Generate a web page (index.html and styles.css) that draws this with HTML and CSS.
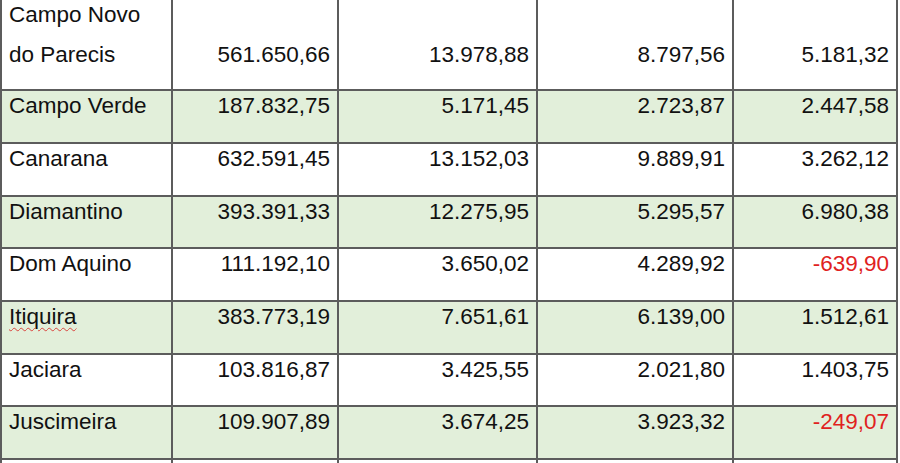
FILE: index.html
```html
<!DOCTYPE html>
<html lang="pt">
<head>
<meta charset="utf-8">
<title>Tabela</title>
<link rel="stylesheet" href="styles.css">
</head>
<body>
<div class="sheet">
  <div class="row first">
    <div class="cell name"><div>Campo Novo</div><div class="second-line">do Parecis</div></div>
    <div class="cell num low">561.650,66</div>
    <div class="cell num low">13.978,88</div>
    <div class="cell num low">8.797,56</div>
    <div class="cell num low">5.181,32</div>
  </div>
  <div class="row green">
    <div class="cell name">Campo Verde</div>
    <div class="cell num">187.832,75</div>
    <div class="cell num">5.171,45</div>
    <div class="cell num">2.723,87</div>
    <div class="cell num">2.447,58</div>
  </div>
  <div class="row">
    <div class="cell name">Canarana</div>
    <div class="cell num">632.591,45</div>
    <div class="cell num">13.152,03</div>
    <div class="cell num">9.889,91</div>
    <div class="cell num">3.262,12</div>
  </div>
  <div class="row green short">
    <div class="cell name">Diamantino</div>
    <div class="cell num">393.391,33</div>
    <div class="cell num">12.275,95</div>
    <div class="cell num">5.295,57</div>
    <div class="cell num">6.980,38</div>
  </div>
  <div class="row">
    <div class="cell name">Dom Aquino</div>
    <div class="cell num">111.192,10</div>
    <div class="cell num">3.650,02</div>
    <div class="cell num">4.289,92</div>
    <div class="cell num neg">-639,90</div>
  </div>
  <div class="row green">
    <div class="cell name"><span class="spell">Itiquira</span></div>
    <div class="cell num">383.773,19</div>
    <div class="cell num">7.651,61</div>
    <div class="cell num">6.139,00</div>
    <div class="cell num">1.512,61</div>
  </div>
  <div class="row short">
    <div class="cell name">Jaciara</div>
    <div class="cell num">103.816,87</div>
    <div class="cell num">3.425,55</div>
    <div class="cell num">2.021,80</div>
    <div class="cell num">1.403,75</div>
  </div>
  <div class="row green">
    <div class="cell name">Juscimeira</div>
    <div class="cell num">109.907,89</div>
    <div class="cell num">3.674,25</div>
    <div class="cell num">3.923,32</div>
    <div class="cell num neg">-249,07</div>
  </div>
  <div class="row last">
    <div class="cell name"></div>
    <div class="cell num"></div>
    <div class="cell num"></div>
    <div class="cell num"></div>
    <div class="cell num"></div>
  </div>
</div>
</body>
</html>
```

FILE: styles.css
```css
html, body {
  margin: 0;
  padding: 0;
  background: #ffffff;
  overflow: hidden;
}

.sheet {
  width: 898px;
  border-left: 2px solid #5c5c5c;
  box-sizing: border-box;
  font-family: "Liberation Sans", Arial, sans-serif;
  font-size: 22.5px;
  line-height: 30px;
  color: #111111;
}

.row {
  display: grid;
  grid-template-columns: 171px 166px 199px 196px 164px;
  height: 53px;
  box-sizing: border-box;
  border-bottom: 2px solid #5c5c5c;
  background: #ffffff;
}

.row.first {
  height: 91px;
}

.row.short {
  height: 52px;
}

.row.last {
  height: 3px;
  border-bottom: none;
}

.row.green {
  background: #e2efda;
}

.cell {
  border-right: 2px solid #5c5c5c;
  padding: 0 7px;
  white-space: nowrap;
  overflow: hidden;
}

.num {
  text-align: right;
}

.num.low {
  padding-top: 40px;
}

.second-line {
  margin-top: 10px;
}

.neg {
  color: #e0221e;
}

.spell {
  text-decoration: underline wavy #d9453f;
  text-decoration-thickness: 1px;
  text-underline-offset: 3px;
}
```
